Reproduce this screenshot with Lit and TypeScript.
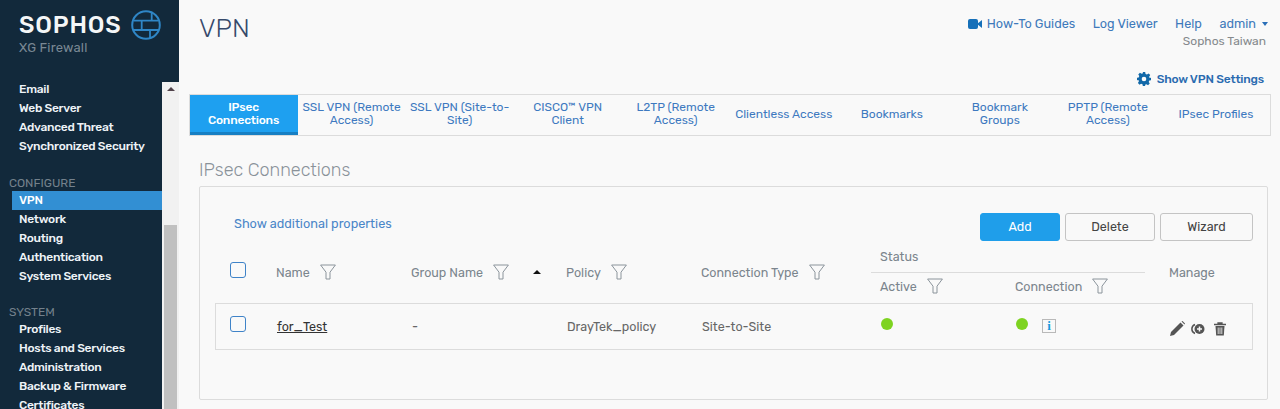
import { LitElement, html, css } from "lit";
import { customElement } from "lit/decorators.js";

const funnel = html`<svg class="funnel" viewBox="0 0 16 16" width="16" height="16"><path d="M.6 1h14.800L10 8.200V15H6V8.200z" fill="none" stroke="#8b949b" stroke-width="1"/></svg>`;

const globe = html`<svg class="globe" viewBox="0 0 30 30" width="30" height="30" fill="none" stroke="#2f86c6" stroke-width="2">
  <circle cx="15" cy="15" r="13.800"/>
  <path d="M3 10.700H27M2 20H28M10.700 10.700V20M20.700 1.800V10.700M19 20V28.200" stroke-width="1.800"/>
</svg>`;

@customElement("app-root")
export class AppRoot extends LitElement {
  static styles = css`
    :host { display: block; width: 1280px; height: 409px; overflow: hidden; font-family: Rubik, Roboto, "Noto Sans", sans-serif; font-size: 13px; background: #f9f9f9; }
    .app { display: flex; height: 409px; overflow: hidden; }
    .side { width: 179px; flex: none; background: #12293b; display: flex; flex-direction: column; overflow: hidden; }
    .logo { height: 80px; flex: none; padding: 10px 0 0 19px; box-sizing: border-box; }
    .brand { display: flex; align-items: center; gap: 10px; height: 30px; }
    .word { color: #f4f6f7; font-size: 24px; font-weight: 500; letter-spacing: .85px; line-height: 30px; width: 102px; white-space: nowrap; }
    .sub { color: #7a8894; font-size: 13px; line-height: 15px; letter-spacing: .2px; }
    .side-body { flex: 1; display: flex; min-height: 0; }
    .nav { width: 162px; flex: none; }
    .group { padding-left: 12px; }
    .item { height: 19px; line-height: 18px; padding-left: 7px; color: #eef3f7; font-size: 12px; letter-spacing: -.28px; font-weight: 500; white-space: nowrap; }
    .item.on { background: #328fd3; color: #fff; }
    .label { height: 35px; box-sizing: border-box; padding: 20px 0 0 9px; line-height: 15px; color: #74818c; font-size: 12px; }
    .label.second { height: 34px; padding-top: 19px; }
    .bar { width: 17px; flex: none; background: #f1f1f1; margin-top: 2px; display: flex; flex-direction: column; padding: 0 2px; box-sizing: border-box; }
    .bar-arrow { height: 0; width: 0; border: 4px solid transparent; border-top: 0; border-bottom: 4px solid #50424a; margin: 5px auto 0; }
    .thumb { background: #c0c0c0; flex: 1; margin-top: 134px; }
    .main { flex: 1; min-width: 0; display: flex; flex-direction: column; }
    .top { display: flex; justify-content: space-between; height: 65px; padding: 0 11px 0 20px; flex: none; }
    h1 { margin: 0; font-size: 26px; font-weight: 300; color: #36496b; line-height: 57px; }
    .topright { display: flex; flex-direction: column; align-items: flex-end; padding-top: 15px; }
    .links { display: flex; align-items: center; gap: 17.500px; height: 17px; margin-right: 1px; }
    .links a { color: #3e79bb; font-size: 12.700px; white-space: nowrap; }
    .howto { display: flex; align-items: center; gap: 5px; }
    .caret { display: inline-block; width: 0; height: 0; border: 3.500px solid transparent; border-bottom: 0; border-top: 4px solid #2a6fb8; margin: 0 0 2px 6px; }
    .org { color: #85898d; font-size: 12px; margin: 2px 3px 0 0; line-height: 15px; }
    .settings { display: flex; justify-content: flex-end; align-items: center; gap: 6px; height: 17px; padding-right: 16px; margin-top: 5px; color: #2a6bb0; font-weight: 500; font-size: 12px; letter-spacing: -.2px; flex: none; }
    .tabs { display: flex; margin: 7px 9px 0 9.500px; height: 42px; box-sizing: border-box; border: 1px solid #dcdcdc; flex: none; width: 1082.500px; }
    .tab { flex: 1 1 0; display: flex; align-items: center; justify-content: center; text-align: center; color: #3e79c0; font-size: 12px; line-height: 13px; padding: 0 2px 2px; box-sizing: border-box; }
    .tab.on { background: #1ea0f0; color: #fff; font-weight: 500; letter-spacing: -.2px; border-bottom: 3px solid #177fc3; padding-bottom: 0; }
    h2 { margin: 22px 0 0 20px; font-size: 18px; font-weight: 300; color: #8a9299; line-height: 24px; flex: none; }
    .panel { margin: 4px 12px 0 20px; border: 1px solid #dcdcdc; border-radius: 2px; height: 214px; box-sizing: border-box; padding: 0 14px 0 15px; flex: none; }
    .tools { display: flex; align-items: flex-start; justify-content: space-between; padding-top: 26px; height: 56px; box-sizing: border-box; }
    .more { color: #4a86c8; font-size: 12.700px; margin: 3px 0 0 19px; }
    .btns { display: flex; gap: 5px; }
    .btn { height: 28px; box-sizing: border-box; border: 1px solid #c4c4c4; border-radius: 3px; color: #444; display: flex; align-items: center; justify-content: center; font-size: 12.500px; background: #f9f9f9; padding-bottom: 2px; }
    .btn.add { width: 80px; background: #1f9eea; border-color: #1f9eea; color: #fff; }
    .btn.del { width: 90px; }
    .btn.wiz { width: 93px; }
    .grid { display: grid; grid-template-columns: 61px 135px 155px 135px 179px 135px 154px 1fr; }
    .head { color: #7b858d; font-size: 12.500px; height: 60px; grid-template-rows: 30px 30px; }
    .h { grid-row: 1 / 3; display: flex; align-items: center; gap: 10px; padding-bottom: 2px; box-sizing: border-box; }
    .h.chk { padding: 0 0 6px 15px; }
    .status { grid-column: 6 / 8; grid-row: 1; margin-left: -9px; padding: 0 0 2px 9px; border-bottom: 1px solid #dcdcdc; width: 274px; box-sizing: border-box; display: flex; align-items: center; }
    .sub-h { grid-row: 2; display: flex; align-items: center; gap: 10px; padding-bottom: 4px; box-sizing: border-box; }
    .sub-h.active { grid-column: 6; }
    .sub-h.conn { grid-column: 7; }
    .h.manage { grid-column: 8; }
    .sort { width: 0; height: 0; border: 4px solid transparent; border-top: 0; border-bottom: 4px solid #111; margin-left: 14px; }
    .row { border: 1px solid #dcdcdc; height: 47px; box-sizing: border-box; align-items: center; color: #666; font-size: 12.500px; }
    .cb { width: 16px; height: 16px; box-sizing: border-box; border: 1.500px solid #3f83c8; border-radius: 3px; display: block; background: #f9f9f9; }
    .row .c0 { padding-left: 14px; margin-top: -5px; }
    .row .name { color: #333; text-decoration: underline; }
    .dot { width: 12px; height: 12px; background: #7ed321; border-radius: 50%; display: block; }
    .cell-dot { display: flex; align-items: center; gap: 14px; margin-top: -5px; }
    .info { width: 14px; height: 14px; border: 1px solid #b9b9b9; box-sizing: border-box; color: #169bdc; font: 700 13px/12px "Liberation Serif", serif; text-align: center; display: block; margin-top: 3px; }
    .icons { display: flex; align-items: center; gap: 6px; margin-top: 4px; }
    .trash { margin-left: 3px; }
  `;

  render() {
    const g1 = ["Email", "Web Server", "Advanced Threat", "Synchronized Security"];
    const g2 = ["VPN", "Network", "Routing", "Authentication", "System Services"];
    const g3 = ["Profiles", "Hosts and Services", "Administration", "Backup & Firmware", "Certificates"];
    const tabs = [["IPsec", "Connections"], ["SSL VPN (Remote", "Access)"], ["SSL VPN (Site-to-", "Site)"], ["CISCO™ VPN", "Client"], ["L2TP (Remote", "Access)"], ["Clientless Access"], ["Bookmarks"], ["Bookmark", "Groups"], ["PPTP (Remote", "Access)"], ["IPsec Profiles"]];
    return html`<div class="app">
      <aside class="side">
        <div class="logo">
          <div class="brand"><span class="word">SOPHOS</span>${globe}</div>
          <div class="sub">XG Firewall</div>
        </div>
        <div class="side-body">
          <nav class="nav">
            <div class="group">${g1.map(i => html`<div class="item">${i}</div>`)}</div>
            <div class="label">CONFIGURE</div>
            <div class="group">${g2.map((i, n) => html`<div class="item ${n === 0 ? "on" : ""}">${i}</div>`)}</div>
            <div class="label second">SYSTEM</div>
            <div class="group">${g3.map(i => html`<div class="item">${i}</div>`)}</div>
          </nav>
          <div class="bar"><div class="bar-arrow"></div><div class="thumb"></div></div>
        </div>
      </aside>
      <main class="main">
        <div class="top">
          <h1>VPN</h1>
          <div class="topright">
            <div class="links">
              <a class="howto"><svg width="14" height="10" viewBox="0 0 14 10"><rect width="10" height="10" rx="2" fill="#1670b9"/><path d="M9 5l5-4v8z" fill="#1670b9"/></svg>How-To Guides</a>
              <a>Log Viewer</a><a>Help</a><a>admin<span class="caret"></span></a>
            </div>
            <div class="org">Sophos Taiwan</div>
          </div>
        </div>
        <div class="settings"><svg width="14" height="14" viewBox="0 0 24 24"><path fill="#1268a8" fill-rule="evenodd" d="M10 0h4l.7 3.400 2.300 1 2.900-1.900 2.800 2.800L20.800 8l.9 2.200L24 10v4l-2.900.7-1 2.300 1.700 2.900-2.800 2.800-2.900-1.800-2.200.9L14 24h-4l-.6-3-2.400-1-2.600 1.800-2.800-2.800L3.300 16l-.9-2.200L0 14v-4l2.900-.7 1-2.300L2.200 4.200 5 1.400 8 3.200l2.200-.9zM12 8a4 4 0 100 8 4 4 0 000-8z"/></svg>Show VPN Settings</div>
        <div class="tabs">${tabs.map((t, n) => html`<div class="tab ${n === 0 ? "on" : ""}"><span>${t[0]}${t[1] ? html`<br>${t[1]}` : ""}</span></div>`)}</div>
        <h2>IPsec Connections</h2>
        <section class="panel">
          <div class="tools">
            <a class="more">Show additional properties</a>
            <div class="btns"><div class="btn add">Add</div><div class="btn del">Delete</div><div class="btn wiz">Wizard</div></div>
          </div>
          <div class="grid head">
            <div class="h chk"><span class="cb"></span></div>
            <div class="h">Name ${funnel}</div>
            <div class="h">Group Name ${funnel}<span class="sort"></span></div>
            <div class="h">Policy ${funnel}</div>
            <div class="h">Connection Type ${funnel}</div>
            <div class="status">Status</div>
            <div class="sub-h active">Active ${funnel}</div>
            <div class="sub-h conn">Connection ${funnel}</div>
            <div class="h manage">Manage</div>
          </div>
          <div class="grid row">
            <div class="c0"><span class="cb"></span></div>
            <div><span class="name">for_Test</span></div>
            <div>-</div>
            <div>DrayTek_policy</div>
            <div>Site-to-Site</div>
            <div class="cell-dot"><span class="dot"></span></div>
            <div class="cell-dot"><span class="dot"></span><span class="info">i</span></div>
            <div class="icons">
              <svg width="15" height="15" viewBox="0 0 15 15"><path d="M0 15l1-4L10.500 1.500l3 3L4 14z" fill="#555"/><path d="M11.500.5l1-.5 2.500 2.500-.5 1z" fill="#555"/></svg>
              <svg width="14" height="12" viewBox="0 0 14 12"><path d="M4 1.500A4.800 4.800 0 004 10.500" fill="none" stroke="#555" stroke-width="1.500"/><circle cx="8.500" cy="6" r="5" fill="#555"/><path d="M6 6h5M8.500 3.500v5" stroke="#f9f9f9" stroke-width="1.500"/></svg>
              <svg class="trash" width="12" height="14" viewBox="0 0 12 14"><path d="M0 2.500h12M4 2.500V1h4v1.500" fill="none" stroke="#555" stroke-width="1.300"/><path d="M1.500 4h9l-.7 9.500H2.200z" fill="#555"/><path d="M4.200 5.500v6.500M6 5.500v6.500M7.800 5.500v6.500" stroke="#f9f9f9" stroke-width=".8"/></svg>
            </div>
          </div>
        </section>
      </main>
    </div>`;
  }
}
